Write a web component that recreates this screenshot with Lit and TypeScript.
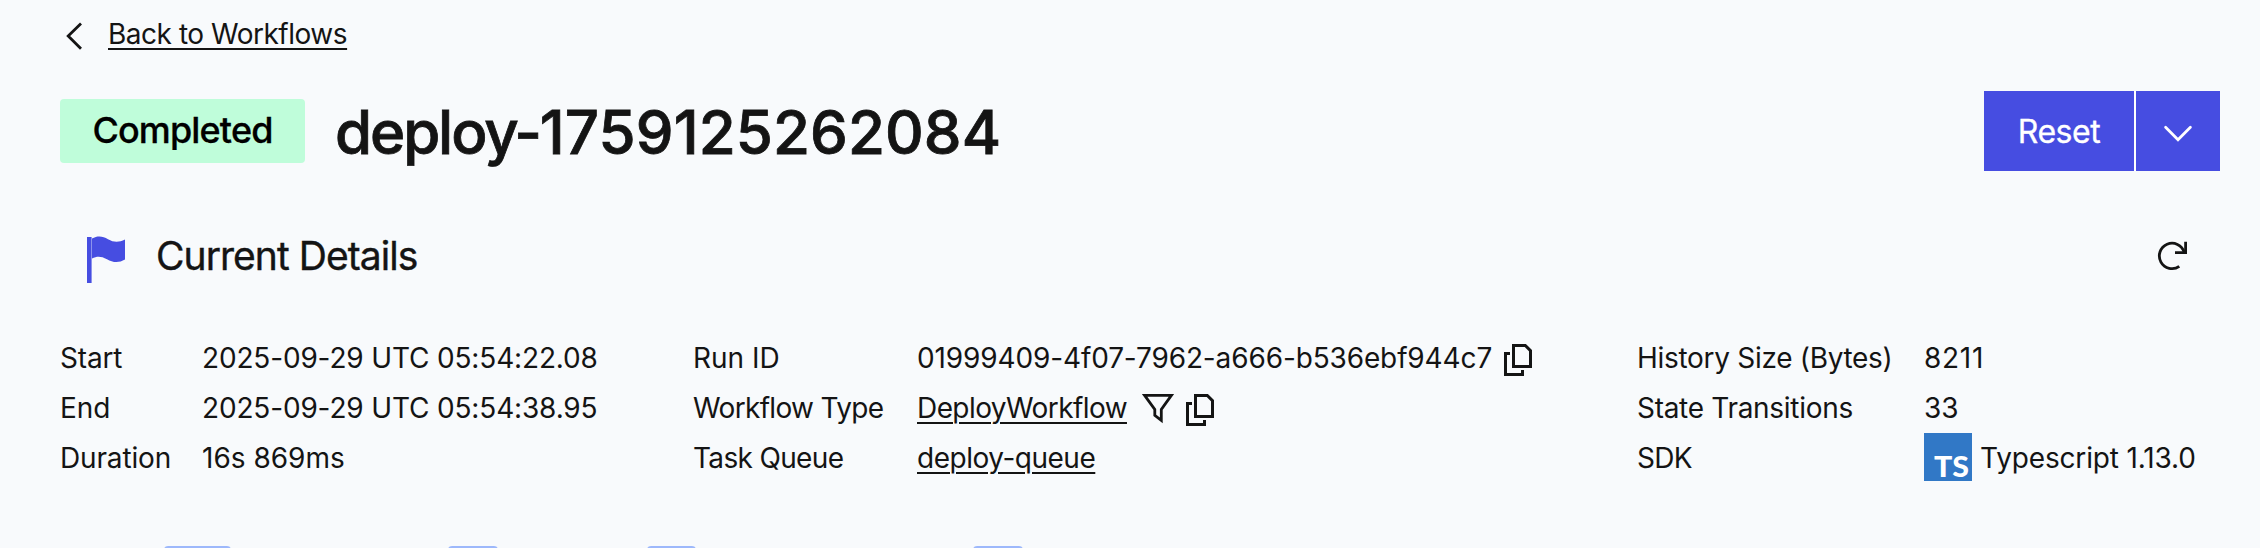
import { LitElement, html, css } from 'lit';
import { customElement } from 'lit/decorators.js';

const copyIcon = html`<svg class="copy" width="28" height="32" viewBox="0 0 28 32" fill="none" stroke="currentColor" stroke-width="3">
  <path d="M9.5 1.5H21.3L26.5 6.7V22.5H9.5Z"/>
  <path d="M6 9.5H1.5V30.5H18.5V26"/>
</svg>`;

@customElement('app-root')
export class AppRoot extends LitElement {
  static styles = css`
    :host { display: block; box-sizing: border-box; width: 2260px; height: 548px; overflow: hidden; background: #f8fafc; color: #141414; font-family: Inter, "Noto Sans", sans-serif; font-size: 28px; line-height: 40px; }
    svg { display: block; flex: none; overflow: visible; }
    a { color: inherit; text-decoration: underline; text-decoration-thickness: 2px; text-underline-offset: 4px; }
    .page { display: flex; flex-direction: column; padding: 14px 40px 0 60px; white-space: nowrap; }
    .back { display: flex; height: 40px; align-items: center; gap: 25px; padding-left: 6px; }
    .back svg { margin-top: 4px; }
    .header { display: flex; justify-content: space-between; height: 80px; margin-top: 37px; }
    .name { display: flex; align-items: center; gap: 30px; }
    .badge { box-sizing: border-box; width: 245px; height: 64px; border-radius: 4px; background: #bffdda; color: #000; font-size: 36px; font-weight: 500; line-height: 62px; text-align: center; letter-spacing: -0.85px; -webkit-text-stroke: 0.3px #000; }
    h1 { margin: 3px 0 0; font-size: 60px; line-height: 73px; font-weight: 500; letter-spacing: 0.1px; -webkit-text-stroke: 0.8px #141414; }
    .prefix { letter-spacing: -2.1px; }
    .actions { display: flex; gap: 2px; height: 80px; background: #fff; }
    .btn { display: flex; align-items: center; justify-content: center; box-sizing: border-box; border: 0; padding: 0; background: #464de1; color: #fff; font: 400 32px/48px Inter, sans-serif; letter-spacing: -0.48px; }
    .reset { width: 150px; padding-top: 2px; -webkit-text-stroke: 0.3px #fff; }
    .more { width: 84px; padding-top: 6px; }
    .section { display: flex; align-items: center; height: 60px; margin-top: 56px; padding: 0 33px 0 27px; }
    .flag { margin-top: 6px; }
    .refresh { margin-bottom: 2px; }
    h2 { margin: 0 0 3px; flex: 1; padding-left: 31px; font-size: 39px; line-height: 56px; font-weight: 400; letter-spacing: -0.95px; -webkit-text-stroke: 0.4px #141414; }
    .details { display: grid; grid-template-columns: 633px 944px 1fr; margin-top: 46px; }
    .col { display: grid; grid-auto-rows: 50px; align-items: center; }
    .time { grid-template-columns: 142px 1fr; }
    .run { grid-template-columns: 224px 1fr; }
    .stats { grid-template-columns: 287px 1fr; }
    .cell { display: flex; align-items: center; }
    .copy { margin: 4px 0 0 12px; }
    .filter { margin: 2px 0 0 15px; }
    .sdk { gap: 8px; }
    .sdk svg { margin-bottom: 2px; }
    .id { letter-spacing: -0.13px; }
    .s1 { letter-spacing: -0.16px; }
    .s2 { letter-spacing: -0.3px; }
    .s3 { letter-spacing: -0.48px; }
    .s4 { letter-spacing: -0.58px; }
    .s5 { letter-spacing: -0.66px; }
    .wide { letter-spacing: 0.7px; }
    .ts-name { font: 900 29px/29px Lato, sans-serif; fill: #fff; }
    .chips { display: flex; height: 2px; margin-top: 63px; overflow: hidden; padding-left: 104px; }
    .chip { height: 40px; border-radius: 4px; background: #9db8fb; }
    .c1 { width: 67px; margin-right: 217px; }
    .c2 { width: 50px; margin-right: 149px; }
    .c3 { width: 49px; margin-right: 277px; }
    .c4 { width: 50px; }
  `;

  render() {
    return html`<main class="page">
      <nav class="back">
        <svg width="17" height="28" viewBox="0 0 17 28" fill="none" stroke="currentColor" stroke-width="2.8"><path d="M15 1.5L2.2 14L15 26.7"/></svg>
        <a class="s3">Back to Workflows</a>
      </nav>
      <header class="header">
        <div class="name"><span class="badge">Completed</span><h1><span class="prefix">deploy-</span>1759125262084</h1></div>
        <div class="actions">
          <button class="btn reset">Reset</button>
          <button class="btn more"><svg width="28" height="18" viewBox="0 0 28 18" fill="none" stroke="currentColor" stroke-width="2.8" stroke-linecap="round"><path d="M1.6 2.2L14 14.7L26.4 2.2"/></svg></button>
        </div>
      </header>
      <section class="section">
        <svg class="flag" width="38" height="48" viewBox="0 0 38 48" fill="#464de1"><path d="M0 1H4.6V47H0Z"/><path d="M5 2.5C11-.8 16 .2 21 3.2C27 6.6 32 6.4 38 3.5V23.5C32 27 26 26.8 20 23.2C14 20 10 20 5 22.5Z"/></svg>
        <h2>Current Details</h2>
        <svg class="refresh" width="29" height="30" viewBox="0 0 29 30" fill="none" stroke="currentColor" stroke-width="2.8"><path d="M21.3 25.4A12.7 12.7 0 1 1 26.2 11.2"/><path d="M27.6 .7V11.6H17"/></svg>
      </section>
      <section class="details">
        <div class="col time">
          <span class="s1">Start</span><span class="s1">2025-09-29 UTC 05:54:22.08</span>
          <span>End</span><span class="s1">2025-09-29 UTC 05:54:38.95</span>
          <span class="s1">Duration</span><span>16s 869ms</span>
        </div>
        <div class="col run">
          <span>Run ID</span><span class="cell"><span class="id">01999409-4f07-7962-a666-b536ebf944c7</span>${copyIcon}</span>
          <span class="s5">Workflow Type</span><span class="cell"><a class="s4">DeployWorkflow</a><svg class="filter" width="32" height="30" viewBox="0 0 32 30" fill="none" stroke="currentColor" stroke-width="2.8"><path d="M2.6 1.4H29.4L19.3 15.4V26.4L12.8 21.4V15.4Z"/></svg>${copyIcon}</span>
          <span class="s5">Task Queue</span><span><a class="s3">deploy-queue</a></span>
        </div>
        <div class="col stats">
          <span class="s2">History Size (Bytes)</span><span class="wide">8211</span>
          <span class="s2">State Transitions</span><span>33</span>
          <span class="s5">SDK</span><span class="cell sdk"><svg width="48" height="48" viewBox="0 0 48 48"><rect width="48" height="48" fill="#3178c6"/><text class="ts-name" x="10" y="43.6" textLength="35" lengthAdjust="spacingAndGlyphs">TS</text></svg><span class="s1">Typescript 1.13.0</span></span>
        </div>
      </section>
      <div class="chips"><span class="chip c1"></span><span class="chip c2"></span><span class="chip c3"></span><span class="chip c4"></span></div>
    </main>`;
  }
}
